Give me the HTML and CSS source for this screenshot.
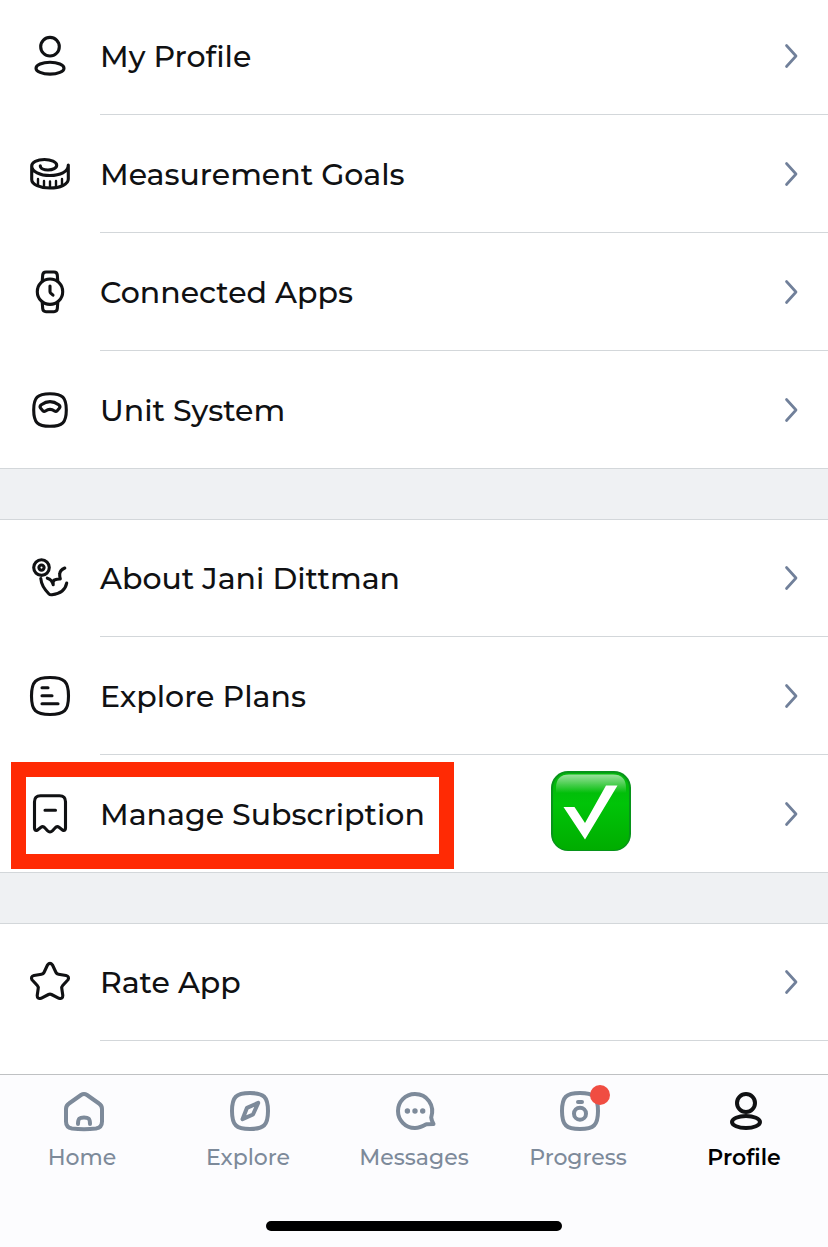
FILE: index.html
```html
<!DOCTYPE html>
<html lang="en">
<head>
  <meta charset="utf-8">
  <title>Profile</title>
  <link rel="stylesheet" href="styles.css">
</head>
<body>
  <div class="screen">
    <main class="menu">
      <div class="group">
        <a class="row">
          <svg class="icon" viewBox="0 0 48 48"><circle cx="24" cy="14.7" r="9.3"/><ellipse cx="24" cy="36.2" rx="14" ry="5.9"/></svg>
          <span class="label">My Profile</span>
          <svg class="chevron" viewBox="0 0 16 28"><path d="M3.5 3.5L13 14l-9.5 10.5"/></svg>
        </a>
        <a class="row">
          <svg class="icon" viewBox="0 0 48 48"><path d="M14.3 15.7C14.3 18.5 18 20 22 20C27 20 30.7 18 30.7 15.2C30.7 12 25 9.5 18.5 9.5C11 9.500 5.700 12.200 5.700 16C5.700 21.500 14 25.500 24 25.500C34 25.500 42.300 22 42.300 15V29C42.300 34.500 34 38 24 38C14 38 5.700 34.500 5.700 29.500V16"/><path class="ticks" d="M12 29v6M18 31v6M24 31.500v6M30 31v6M36 29v6"/></svg>
          <span class="label">Measurement Goals</span>
          <svg class="chevron" viewBox="0 0 16 28"><path d="M3.5 3.5L13 14l-9.5 10.5"/></svg>
        </a>
        <a class="row">
          <svg class="icon" viewBox="0 0 48 48"><circle cx="24" cy="23.7" r="12.7"/><path d="M16.2 13.5L16.7 7Q17 4 20 4H28Q31 4 31.3 7L31.8 13.5M16.2 34L16.7 40.7Q17 43.7 20 43.7H28Q31 43.7 31.3 40.7L31.8 34M24 18v5.5q0 1 .7 1.700l2.300 2"/></svg>
          <span class="label">Connected Apps</span>
          <svg class="chevron" viewBox="0 0 16 28"><path d="M3.5 3.5L13 14l-9.5 10.5"/></svg>
        </a>
        <a class="row">
          <svg class="icon" viewBox="0 0 48 48"><path d="M24 7.7C36.5 7.7 40.3 11.5 40.3 24S36.5 40.3 24 40.3S7.7 36.5 7.7 24S11.5 7.7 24 7.7Z"/><path d="M15.3 18.700Q24 12.500 32.700 18.700Q34.800 20.300 33.300 22.300L31.200 24.700Q30 26 28.500 25Q24 21.800 19.500 25Q18 26 16.800 24.700L14.700 22.300Q13.200 20.300 15.300 18.700Z"/></svg>
          <span class="label">Unit System</span>
          <svg class="chevron" viewBox="0 0 16 28"><path d="M3.5 3.5L13 14l-9.5 10.5"/></svg>
        </a>
      </div>

      <div class="group">
        <a class="row">
          <svg class="icon" viewBox="0 0 48 48"><circle cx="15.5" cy="13.6" r="7.800"/><circle cx="15.5" cy="13.6" r="2.600"/><path d="M14.800 24.500C15.300 31.500 19 36 23 40Q24 41 26 40.700C34 39.800 39.500 35.500 40.700 29M21.300 24.200Q26 25.500 27.200 30.700Q26.500 26.500 29 25.700Q31.500 24.800 34.300 25Q33.500 22 33.700 20Q34 16 38.800 14"/></svg>
          <span class="label">About Jani Dittman</span>
          <svg class="chevron" viewBox="0 0 16 28"><path d="M3.5 3.5L13 14l-9.5 10.5"/></svg>
        </a>
        <a class="row">
          <svg class="icon" viewBox="0 0 48 48"><path d="M24 5.5C38.5 5.5 42.5 9.5 42.5 24S38.5 42.5 24 42.5S5.5 38.5 5.5 24S9.5 5.5 24 5.5Z"/><path d="M16 15.7h6M16 23.7h10M16 31.7h16"/></svg>
          <span class="label">Explore Plans</span>
          <svg class="chevron" viewBox="0 0 16 28"><path d="M3.5 3.5L13 14l-9.5 10.5"/></svg>
        </a>
        <a class="row">
          <svg class="icon" viewBox="0 0 48 48"><path d="M14.500 5.700H33.500Q39.500 5.700 39.500 11.700V38Q39.500 41.500 36.500 40L33 37.300Q31 35.700 29 38L26.500 40.700Q24 43.300 21.500 40.700L19 38Q17 35.700 15 37.300L11.500 40Q8.500 41.500 8.500 38V11.700Q8.500 5.700 14.500 5.700ZM19 20.300h10.500"/></svg>
          <span class="label">Manage Subscription</span>
          <svg class="chevron" viewBox="0 0 16 28"><path d="M3.5 3.5L13 14l-9.5 10.5"/></svg>
          <span class="highlight"></span>
          <svg class="check" viewBox="0 0 80 80">
            <defs>
              <linearGradient id="green" x2="0" y2="1"><stop offset="0" stop-color="#04b60c"/><stop offset=".4" stop-color="#00c408"/><stop offset="1" stop-color="#00ad00"/></linearGradient>
              <linearGradient id="shine" x2="0" y2="1"><stop offset="0" stop-color="#fff" stop-opacity=".6"/><stop offset="1" stop-color="#fff" stop-opacity="0"/></linearGradient>
            </defs>
            <rect width="80" height="80" rx="17" fill="#07931a"/>
            <rect x="2" y="2" width="76" height="77" rx="15" fill="url(#green)"/>
            <path d="M5 22V17Q5 3.500 18 3.500H62Q75 3.500 75 17V22Z" fill="url(#shine)"/>
            <path d="M12.5 36H23.5L34 52L55 14.5H66.5L34 68.5Z" fill="#fff"/>
          </svg>
        </a>
      </div>

      <div class="group">
        <a class="row indent">
          <svg class="icon" viewBox="0 0 48 48"><path d="M21.5 7Q24 3.8 26.5 7L30 14.5Q30.7 16 32.5 16.3L40 17.5Q43.7 18.5 42 21.8L36.7 27.5Q35.5 28.8 35.8 30.5L36.8 37.5Q36.8 41.3 33 40.3L25.5 36.5Q24 35.8 22.5 36.5L15 40.3Q11.2 41.3 11.2 37.5L12.2 30.5Q12.5 28.8 11.3 27.5L6 21.8Q4.3 18.5 8 17.5L15.5 16.3Q17.3 16 18 14.5Z"/></svg>
          <span class="label">Rate App</span>
          <svg class="chevron" viewBox="0 0 16 28"><path d="M3.5 3.5L13 14l-9.5 10.5"/></svg>
        </a>
      </div>
    </main>

    <nav class="tabbar">
      <div class="tabs">
        <a class="tab">
          <svg class="tab-icon" viewBox="0 0 48 48"><path d="M6 22Q6 18.5 9 16.5L21 8Q24 6 27 8L39 16.5Q42 18.5 42 22V34.5Q42 40.5 36 41.5Q24 42.8 12 41.500Q6 40.500 6 34.500ZM18 37C18 31.500 19.500 30.500 24 30.500S30 31.500 30 37"/></svg>
          <span>Home</span>
        </a>
        <a class="tab">
          <svg class="tab-icon" viewBox="0 0 48 48"><path d="M24 6C38 6 42 10 42 24S38 42 24 42S6 38 6 24S10 6 24 6ZM32.2 15.9L27 27.5L16.5 32.2L21 20.8Z"/></svg>
          <span>Explore</span>
        </a>
        <a class="tab">
          <svg class="tab-icon" viewBox="0 0 48 48"><path d="M41.5 37Q39.5 33.5 39.2 30.5C43 18 35 7 23 7C13 7 6 15 6 24S13 41 23 41C28 41 30.5 39.5 34.5 37.2Z"/><g class="dots"><circle cx="15.4" cy="24" r="2.7"/><circle cx="23" cy="24" r="2.7"/><circle cx="30.7" cy="24" r="2.7"/></g></svg>
          <span>Messages</span>
        </a>
        <a class="tab">
          <div class="badge-box">
            <svg class="tab-icon" viewBox="0 0 48 48"><path d="M24 6C38 6 42 10 42 24S38 42 24 42S6 38 6 24S10 6 24 6ZM22 15h4"/><circle cx="24" cy="26.7" r="6"/></svg>
            <i class="badge"></i>
          </div>
          <span>Progress</span>
        </a>
        <a class="tab active">
          <svg class="tab-icon" viewBox="0 0 48 48"><circle cx="24" cy="16" r="9"/><ellipse cx="24" cy="35" rx="14" ry="6"/></svg>
          <span>Profile</span>
        </a>
      </div>
      <div class="home-indicator"></div>
    </nav>
  </div>
</body>
</html>
```
FILE: styles.css
```css
body {
  margin: 0;
  background: #fff;
  color: #101113;
  font-family: Montserrat, Inter, sans-serif;
  font-variant-ligatures: none;
}
.screen {
  display: flex;
  flex-direction: column;
  height: 1247px;
  overflow: hidden;
}
.menu {
  flex: 1;
  display: flex;
  flex-direction: column;
  gap: 50px;
  margin-top: -3px;
  min-height: 0;
  background: #eff1f3;
}
.group {
  background: #fff;
}
.group:last-child {
  flex: 1;
}
.row {
  display: flex;
  align-items: center;
  position: relative;
  box-sizing: border-box;
  height: 118px;
  padding: 0 29px 0 26px;
  background: linear-gradient(#d3d7da, #d3d7da) 100px 100% / 100% 1px no-repeat;
}
.row:last-child:not(.indent) {
  background-position: 0 100%;
}
.group + .group {
  box-shadow: inset 0 1px #d3d7da;
}
.icon {
  width: 48px;
  height: 48px;
  margin-right: 26px;
  fill: none;
  stroke: #101113;
  stroke-width: 3.1;
  stroke-linecap: round;
  stroke-linejoin: round;
}
.ticks {
  stroke-width: 2.4;
}
.label {
  flex: 1;
  padding-top: 2px;
  font-size: 30px;
  font-weight: 500;
  line-height: 36px;
  white-space: nowrap;
}
.chevron {
  width: 16px;
  height: 28px;
  fill: none;
  stroke: #71809a;
  stroke-width: 2.7;
  stroke-linecap: round;
  stroke-linejoin: round;
}
.highlight {
  position: absolute;
  top: 7px;
  left: 11px;
  box-sizing: border-box;
  width: 443px;
  height: 107px;
  border: 15px solid #ff2a04;
}
.check {
  position: absolute;
  top: 16px;
  left: 551px;
  width: 80px;
  height: 80px;
}

/* bottom tabs */
.tabbar {
  display: flex;
  flex-direction: column;
  align-items: center;
  justify-content: space-between;
  position: relative;
  box-sizing: border-box;
  height: 173px;
  padding: 12px 0 16px;
  border-top: 1px solid #bfc1c3;
  background: #fcfcfe;
}
.tabs {
  display: grid;
  grid-template-columns: 164px 168px 164px 164px 168px;
}
.tab {
  display: flex;
  flex-direction: column;
  align-items: center;
  color: #7d8a9a;
  font-size: 22px;
  font-weight: 500;
  line-height: 28px;
}
.tab-icon {
  display: block;
  width: 48px;
  height: 48px;
  margin: 0 0 9px 4px;
  fill: none;
  stroke: #7d8a9a;
  stroke-width: 4;
  stroke-linecap: round;
  stroke-linejoin: round;
}
.dots {
  fill: #7d8a9a;
  stroke: none;
}
.badge-box {
  position: relative;
}
.badge {
  position: absolute;
  top: -2px;
  right: -6px;
  width: 20px;
  height: 20px;
  border-radius: 50%;
  background: #f04d42;
}
.active {
  color: #000;
  font-weight: 600;
}
.active .tab-icon {
  stroke: #101113;
}
.home-indicator {
  width: 296px;
  height: 10px;
  border-radius: 5px;
  background: #000;
}
```
